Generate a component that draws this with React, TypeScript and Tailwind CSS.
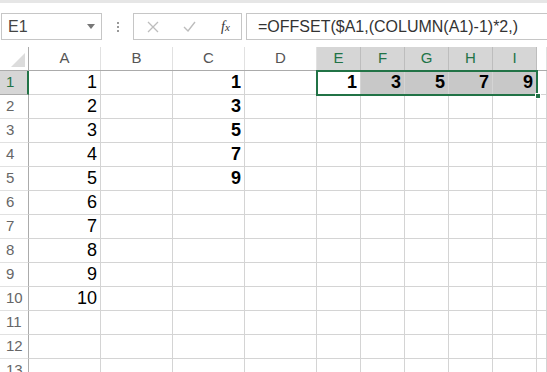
import React from 'react';

const cols = [
  { name: 'A', w: 'w-[72px]' },
  { name: 'B', w: 'w-[72px]' },
  { name: 'C', w: 'w-[72px]' },
  { name: 'D', w: 'w-[72px]' },
  { name: 'E', w: 'w-[44px]', sel: true },
  { name: 'F', w: 'w-[44px]', sel: true },
  { name: 'G', w: 'w-[44px]', sel: true },
  { name: 'H', w: 'w-[44px]', sel: true },
  { name: 'I', w: 'w-[44px]', sel: true },
  { name: '', w: 'flex-1' },
];

const colA: Record<number, string> = { 1: '1', 2: '2', 3: '3', 4: '4', 5: '5', 6: '6', 7: '7', 8: '8', 9: '9', 10: '10' };
const colC: Record<number, string> = { 1: '1', 2: '3', 3: '5', 4: '7', 5: '9' };
const row1: Record<string, string> = { E: '1', F: '3', G: '5', H: '7', I: '9' };

function FormulaBar() {
  return (
    <div className="flex h-[47px] items-start border-t-[3px] border-[#e6e6e6] pt-[10px]">
      <div className="ml-px flex h-[27px] w-[101px] items-center justify-between border border-[#c6c6c6] pl-[6px] pr-[6px] text-[16px] text-[#444]">
        <span>E1</span>
        <svg width="8" height="5" viewBox="0 0 8 5"><path d="M0 0h8L4 5z" fill="#777" /></svg>
      </div>
      <div className="flex h-[27px] w-[31px] flex-col items-center justify-center gap-[2px]">
        <span className="h-[2px] w-[2px] bg-[#999]" />
        <span className="h-[2px] w-[2px] bg-[#999]" />
        <span className="h-[2px] w-[2px] bg-[#999]" />
      </div>
      <div className="flex h-[27px] w-[109px] items-center border border-[#c6c6c6]">
        <svg className="ml-[13px]" width="12" height="12" viewBox="0 0 12 12"><path d="M1 1l10 10M11 1L1 11" stroke="#bdbdbd" strokeWidth="1.3" /></svg>
        <svg className="ml-[24px]" width="13" height="11" viewBox="0 0 13 11"><path d="M1 6l4 4 7-9" stroke="#bdbdbd" strokeWidth="1.4" fill="none" /></svg>
        <span className="ml-[25px] font-['Liberation_Serif',serif] text-[14px] italic text-[#333]">f<span className="text-[11px]">x</span></span>
      </div>
      <div className="ml-[4px] flex h-[27px] flex-1 items-center border border-r-0 border-[#c6c6c6] pl-[11px] text-[16px] text-[#333]">
        =OFFSET($A1,(COLUMN(A1)-1)*2,)
      </div>
    </div>
  );
}

function HeaderRow() {
  return (
    <div className="flex h-[24px] border-b border-[#ababab]">
      <div className="relative w-[29px] border-r border-[#ababab] bg-white">
        <svg className="absolute right-[3px] bottom-[3px]" width="14" height="14" viewBox="0 0 14 14"><path d="M14 0v14H0z" fill="#dcdcdc" /></svg>
      </div>
      {cols.map((c, i) => (
        <div
          key={i}
          className={`${c.w} flex items-center justify-center border-r text-[15px] ${
            c.sel ? 'border-[#bdbdbd] bg-[#d6d6d6] text-[#217346]' : 'border-[#e1e1e1] bg-white text-[#555]'
          }`}
        >
          {c.name}
        </div>
      ))}
    </div>
  );
}

function Row({ n }: { n: number }) {
  const active = n === 1;
  return (
    <div className="flex h-[24px]">
      <div
        className={`w-[29px] flex items-center pl-[6px] text-[15px] border-b ${
          active
            ? 'border-r-2 border-r-[#217346] border-b-[#ababab] bg-[#d6d6d6] text-[#217346]'
            : 'border-r border-r-[#ababab] border-b-[#e1e1e1] bg-white text-[#666]'
        }`}
      >
        {n}
      </div>
      {cols.map((c, i) => {
        let text = '';
        let bold = false;
        if (c.name === 'A') text = colA[n] ?? '';
        if (c.name === 'C') {
          text = colC[n] ?? '';
          bold = true;
        }
        if (active && row1[c.name]) {
          text = row1[c.name];
          bold = true;
        }
        const shaded = active && c.sel && c.name !== 'E';
        return (
          <div
            key={i}
            className={`${c.w} flex items-center justify-end border-r border-b border-[#d4d4d4] pr-[3px] text-[18px] text-black ${
              bold ? 'font-bold' : ''
            } ${shaded ? 'bg-[#c8c8c8]' : 'bg-white'}`}
          >
            {text}
          </div>
        );
      })}
    </div>
  );
}

export default function App() {
  return (
    <div className="relative h-[372px] w-[547px] overflow-hidden bg-white font-['Liberation_Sans',Arial,sans-serif]">
      <FormulaBar />
      <HeaderRow />
      {Array.from({ length: 13 }).map((_, i) => (
        <Row key={i} n={i + 1} />
      ))}
      {/* selection box E1:I1 */}
      <div className="pointer-events-none absolute left-[316px] top-[70px] h-[26px] w-[222px] border-2 border-[#217346]" />
      <div className="pointer-events-none absolute left-[535px] top-[93px] h-[6px] w-[6px] border border-white bg-[#217346]" />
    </div>
  );
}
